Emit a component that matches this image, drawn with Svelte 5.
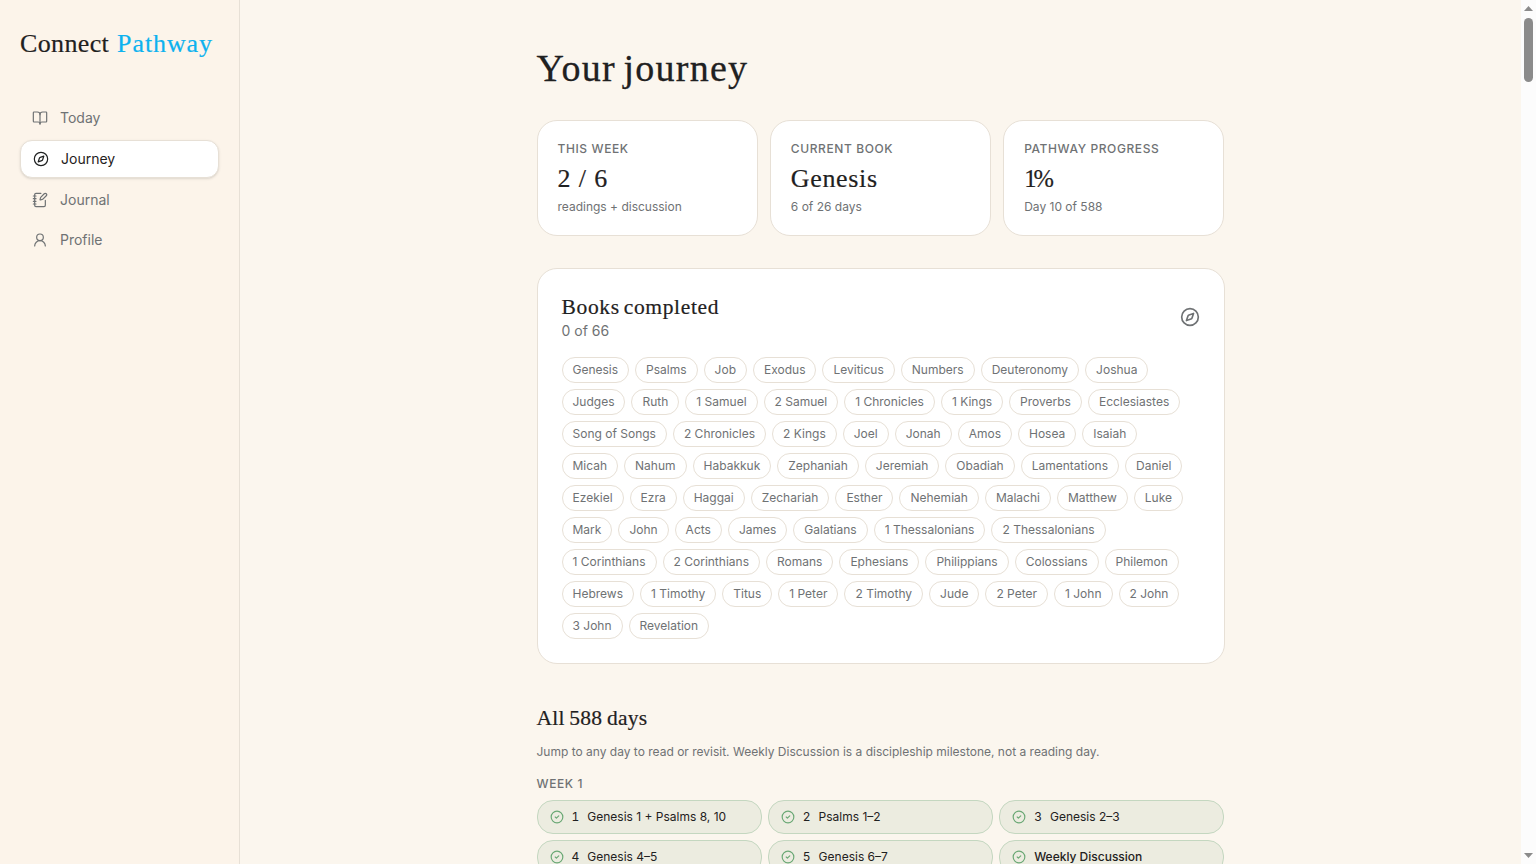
<script lang="ts">
  type Icon = 'book' | 'compass' | 'notebook' | 'user';
  type Day = { n?: number; label: string };

  const nav: { label: string; icon: Icon }[] = [
    { label: 'Today', icon: 'book' },
    { label: 'Journey', icon: 'compass' },
    { label: 'Journal', icon: 'notebook' },
    { label: 'Profile', icon: 'user' },
  ];
  let active = $state('Journey');

  const stats = [
    { label: 'This week', value: '2 / 6', note: 'readings + discussion', kind: 'count' },
    { label: 'Current book', value: 'Genesis', note: '6 of 26 days', kind: 'name' },
    { label: 'Pathway progress', value: '1%', note: 'Day 10 of 588', kind: 'percent' },
  ];

  const books = [
    'Genesis', 'Psalms', 'Job', 'Exodus', 'Leviticus', 'Numbers', 'Deuteronomy', 'Joshua',
    'Judges', 'Ruth', '1 Samuel', '2 Samuel', '1 Chronicles', '1 Kings', 'Proverbs', 'Ecclesiastes',
    'Song of Songs', '2 Chronicles', '2 Kings', 'Joel', 'Jonah', 'Amos', 'Hosea', 'Isaiah',
    'Micah', 'Nahum', 'Habakkuk', 'Zephaniah', 'Jeremiah', 'Obadiah', 'Lamentations', 'Daniel',
    'Ezekiel', 'Ezra', 'Haggai', 'Zechariah', 'Esther', 'Nehemiah', 'Malachi', 'Matthew', 'Luke',
    'Mark', 'John', 'Acts', 'James', 'Galatians', '1 Thessalonians', '2 Thessalonians',
    '1 Corinthians', '2 Corinthians', 'Romans', 'Ephesians', 'Philippians', 'Colossians', 'Philemon',
    'Hebrews', '1 Timothy', 'Titus', '1 Peter', '2 Timothy', 'Jude', '2 Peter', '1 John', '2 John',
    '3 John', 'Revelation',
  ];

  const days: Day[] = [
    { n: 1, label: 'Genesis 1 + Psalms 8, 10' },
    { n: 2, label: 'Psalms 1–2' },
    { n: 3, label: 'Genesis 2–3' },
    { n: 4, label: 'Genesis 4–5' },
    { n: 5, label: 'Genesis 6–7' },
    { label: 'Weekly Discussion' },
  ];
</script>

{#snippet icon(name: Icon | 'check', size: number, stroke: number = 2)}
  <svg width={size} height={size} viewBox="0 0 24 24" fill="none" stroke="currentColor" stroke-width={stroke} stroke-linecap="round" stroke-linejoin="round" aria-hidden="true">
    {#if name === 'book'}
      <path d="M12 7v14" />
      <path d="M3 18a1 1 0 0 1-1-1V4a1 1 0 0 1 1-1h5a4 4 0 0 1 4 4 4 4 0 0 1 4-4h5a1 1 0 0 1 1 1v13a1 1 0 0 1-1 1h-6a3 3 0 0 0-3 3 3 3 0 0 0-3-3z" />
    {:else if name === 'compass'}
      <circle cx="12" cy="12" r="10" />
      <path d="m16.24 7.76-1.804 5.411a2 2 0 0 1-1.265 1.265L7.76 16.24l1.804-5.411a2 2 0 0 1 1.265-1.265z" />
    {:else if name === 'notebook'}
      <path d="M13.4 2H6a2 2 0 0 0-2 2v16a2 2 0 0 0 2 2h12a2 2 0 0 0 2-2v-7.4" />
      <path d="M2 6h4M2 10h4M2 14h4M2 18h4" />
      <path d="M21.378 5.626a1 1 0 1 0-3.004-3.004l-5.01 5.012a2 2 0 0 0-.506.854l-.837 2.87a.5.5 0 0 0 .62.62l2.87-.837a2 2 0 0 0 .854-.506z" />
    {:else if name === 'user'}
      <circle cx="12" cy="8" r="5" />
      <path d="M20 21a8 8 0 0 0-16 0" />
    {:else}
      <circle cx="12" cy="12" r="10" />
      <path d="m9 12 2 2 4-4" />
    {/if}
  </svg>
{/snippet}

<div class="app">
  <aside>
    <div class="brand"><span>Connect</span><span class="accent">Pathway</span></div>
    <nav>
      {#each nav as item (item.label)}
        <button class:active={active === item.label} onclick={() => (active = item.label)}>
          {@render icon(item.icon, 16, 1.8)}
          <span>{item.label}</span>
        </button>
      {/each}
    </nav>
  </aside>

  <main>
    <div class="content">
      <h1>Your journey</h1>

      <section class="stats">
        {#each stats as s (s.label)}
          <div class="stat">
            <div class="eyebrow">{s.label}</div>
            <div class="value {s.kind}">{s.value}</div>
            <div class="note">{s.note}</div>
          </div>
        {/each}
      </section>

      <section class="books">
        <header>
          <div>
            <h2>Books completed</h2>
            <p>0 of {books.length}</p>
          </div>
          {@render icon('compass', 20)}
        </header>
        <div class="chips">
          {#each books as b (b)}<span class="chip">{b}</span>{/each}
        </div>
      </section>

      <section class="all">
        <h2>All 588 days</h2>
        <p class="note">Jump to any day to read or revisit. Weekly Discussion is a discipleship milestone, not a reading day.</p>
        <div class="eyebrow">Week 1</div>
        <div class="days">
          {#each days as d (d.label)}
            <div class="day" class:milestone={!d.n}>
              {@render icon('check', 14)}
              {#if d.n}<span class="num">{d.n}</span>{/if}
              <span>{d.label}</span>
            </div>
          {/each}
        </div>
      </section>
    </div>
  </main>

  <div class="scrollbar">
    <svg width="9" height="5" viewBox="0 0 9 5"><path d="M0 5 4.5 0 9 5z" /></svg>
    <div class="thumb"></div>
    <svg class="down" width="9" height="5" viewBox="0 0 9 5"><path d="M0 0h9L4.5 5z" /></svg>
  </div>
</div>

<style>
  :global(body) { margin: 0; overflow: hidden; }
  .app {
    --ink: #1f2121;
    --muted: #6f7274;
    --border: #e7e0d6;
    --serif: 'Liberation Serif', serif;
    display: grid;
    grid-template-columns: 240px 1fr 15px;
    height: 100vh;
    overflow: hidden;
    background: #fbf6ee;
    color: var(--ink);
    font: 14px/20px Inter, sans-serif;
  }
  h1, h2, p { margin: 0; }
  svg { flex: none; display: block; }

  aside {
    box-sizing: border-box;
    padding: 28px 20px;
    background: #fcf4ea;
    border-right: 1px solid var(--border);
  }
  .brand {
    display: flex;
    gap: 8px;
    height: 32px;
    margin-bottom: 40px;
    font: 26px/32px var(--serif);
    letter-spacing: 0.35px;
    white-space: nowrap;
    -webkit-text-stroke: 0.2px;
  }
  .brand .accent { color: #0db2ef; letter-spacing: 0.9px; }
  nav { display: flex; flex-direction: column; gap: 4px; }
  nav button {
    display: flex;
    align-items: center;
    gap: 12px;
    padding: 8px 12px;
    border: 0;
    border-radius: 12px;
    background: none;
    color: var(--muted);
    font: inherit;
    text-align: left;
  }
  nav button.active {
    border: 1px solid var(--border);
    background: #fff;
    color: var(--ink);
    box-shadow: 0 1px 3px rgb(0 0 0 / 0.1), 0 1px 2px -1px rgb(0 0 0 / 0.1);
  }

  main { overflow: hidden; }
  .content { width: 688px; margin: 0 auto; padding-top: 48px; }
  h1 {
    margin-bottom: 32px;
    font: 38px/40px var(--serif);
    letter-spacing: 1.25px;
    word-spacing: -3px;
    -webkit-text-stroke: 0.3px;
  }
  h2 { font: 21.5px/28px var(--serif); -webkit-text-stroke: 0.2px; }

  .eyebrow {
    color: var(--muted);
    font-size: 12px;
    font-weight: 500;
    line-height: 16px;
    letter-spacing: 0.6px;
    text-transform: uppercase;
  }
  .note { color: var(--muted); font-size: 12px; line-height: 16px; }

  .stats { display: grid; grid-template-columns: repeat(3, 1fr); gap: 12px; margin-bottom: 32px; }
  .stat { padding: 20px; border: 1px solid var(--border); border-radius: 20px; background: #fff; }
  .value {
    margin: 5px 0 3px;
    font: 26px/34px var(--serif);
    letter-spacing: 0.65px;
    -webkit-text-stroke: 0.2px;
  }
  .value.count { letter-spacing: 1.5px; word-spacing: -1.2px; }
  .value.percent { font-size: 24.5px; letter-spacing: -3px; }

  .books { padding: 24px; border: 1px solid var(--border); border-radius: 20px; background: #fff; }
  .books header {
    display: flex;
    align-items: center;
    justify-content: space-between;
    margin-bottom: 16px;
    color: var(--muted);
  }
  .books h2 { color: var(--ink); letter-spacing: 0.65px; word-spacing: -2px; }
  .chips { display: flex; flex-wrap: wrap; gap: 6px; }
  .chip {
    padding: 4px 10px;
    border: 1px solid var(--border);
    border-radius: 999px;
    color: var(--muted);
    font-size: 12px;
    line-height: 16px;
  }

  .all { margin-top: 40px; }
  .all h2 { letter-spacing: 0.25px; word-spacing: -1px; }
  .all .note { margin: 12px 0 16px; }
  .days { display: grid; grid-template-columns: repeat(3, 1fr); gap: 6px; margin-top: 8px; }
  .day {
    display: flex;
    align-items: center;
    gap: 8px;
    padding: 8px 12px;
    border: 1px solid #c4d7c0;
    border-radius: 16px;
    background: #ecece0;
    font-size: 12px;
    line-height: 16px;
  }
  .day svg { color: #6aa874; }
  .num { font-variant-numeric: tabular-nums; }
  .milestone { font-weight: 500; }

  .scrollbar {
    display: flex;
    flex-direction: column;
    align-items: center;
    padding: 6px 0;
    background: #fcfcfc;
  }
  .scrollbar svg { fill: #8b8b8b; }
  .thumb { width: 9px; height: 64px; margin-top: 7px; border-radius: 5px; background: #8b8b8b; }
  .down { margin-top: auto; }
</style>
